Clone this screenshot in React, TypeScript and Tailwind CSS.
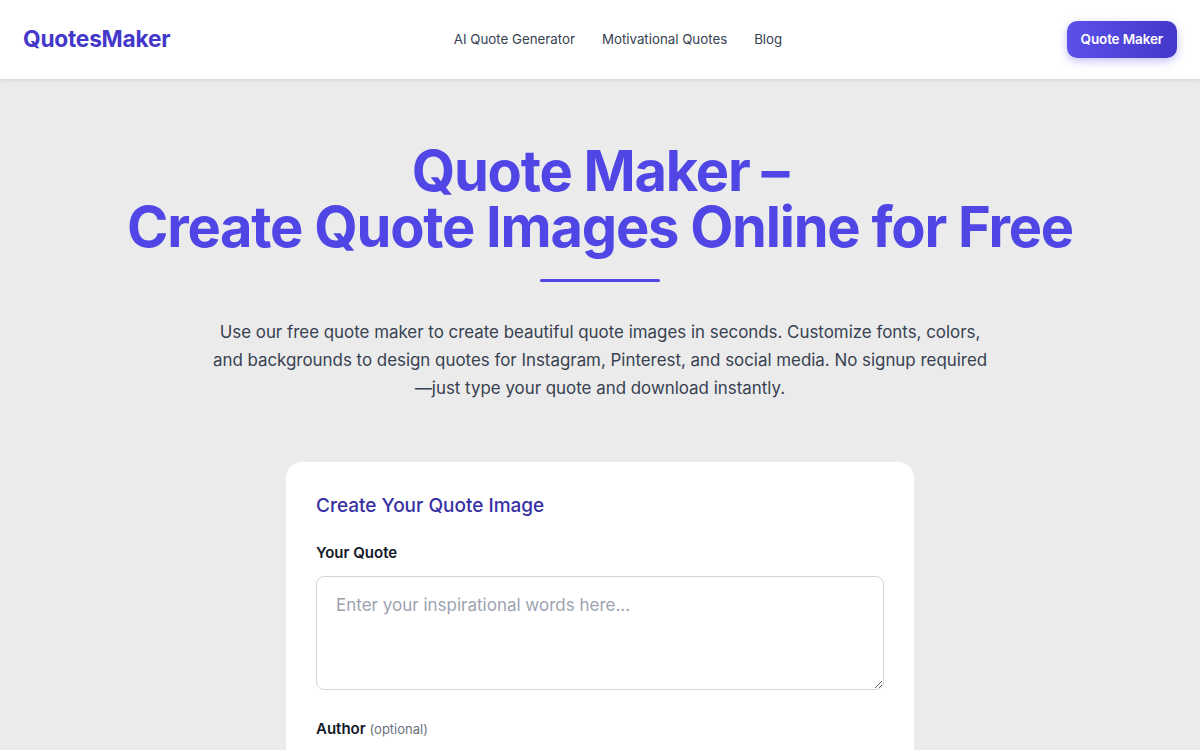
import React from "react";

export default function App() {
  return (
    <div className="min-h-screen bg-[#ebebeb]" style={{ fontFamily: "Inter, 'Noto Sans', sans-serif" }}>
      <header className="h-[79px] bg-white shadow-[0_1px_4px_rgba(0,0,0,0.12)] flex items-center justify-between px-[23px] relative z-10">
        <div className="text-[22.7px] font-bold text-[#4338ca] tracking-[-0.01em] w-[180px]">QuotesMaker</div>
        <nav className="flex items-center gap-[27px] text-[13.3px] text-[#374151] ml-[36px]">
          <a>AI Quote Generator</a>
          <a>Motivational Quotes</a>
          <a>Blog</a>
        </nav>
        <div className="w-[180px] flex justify-end">
          <button className="h-[37px] px-[14px] rounded-[10px] bg-gradient-to-r from-[#5b50ea] to-[#4338ca] text-white text-[13.5px] font-semibold tracking-[-0.01em] shadow-[0_3px_8px_rgba(79,70,229,0.35)]">
            Quote Maker
          </button>
        </div>
      </header>
      <main className="flex flex-col items-center pt-[64px]">
        <h1 className="text-center text-[56px] leading-[56px] font-bold text-[#4f46e5] tracking-[-0.022em]">
          Quote Maker –<br />Create Quote Images Online for Free
        </h1>
        <div className="mt-[24px] w-[120px] h-[3px] bg-[#4f46e5] rounded-full" />
        <p className="mt-[36px] max-w-[790px] text-center text-[16.9px] leading-[28px] text-[#374151]">
          Use our free quote maker to create beautiful quote images in seconds. Customize fonts, colors, and backgrounds to design quotes for Instagram, Pinterest, and social media. No signup required —just type your quote and download instantly.
        </p>
        <div className="mt-[60px] w-[628px] bg-white rounded-2xl px-[30px] pt-[30px] pb-[30px]">
          <h2 className="text-[19px] font-medium text-[#3730a3]">Create Your Quote Image</h2>
          <label className="block mt-[21px] text-[15px] font-semibold text-[#111827]">Your Quote</label>
          <textarea
            className="mt-[12px] block w-full h-[114px] rounded-lg border border-[#d1d5db] px-[19px] py-[16px] text-[17px] placeholder:text-[#9ca3af] outline-none resize-y"
            placeholder="Enter your inspirational words here..."
          />
          <label className="block mt-[28px] text-[15px] font-semibold text-[#111827]">
            Author <span className="font-normal text-[13px] text-[#6b7280]">(optional)</span>
          </label>
          <input className="mt-[10px] block w-full h-[48px] rounded-lg border border-[#d1d5db] px-[19px]" />
        </div>
      </main>
    </div>
  );
}
